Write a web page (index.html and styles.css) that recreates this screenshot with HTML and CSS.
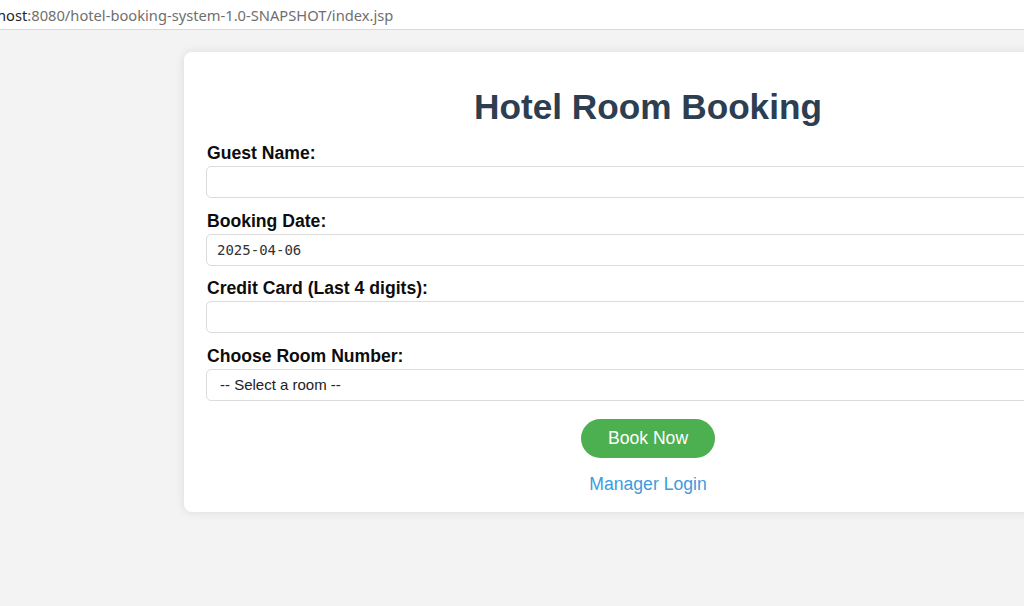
FILE: index.html
```html
<!DOCTYPE html>
<html lang="en">
<head>
<meta charset="utf-8">
<title>Hotel Room Booking</title>
<link rel="stylesheet" href="styles.css">
</head>
<body>
<div class="addressbar"><span class="url"><span class="host">host</span>:8080/hotel-booking-system-1.0-SNAPSHOT/index.jsp</span></div>
<div class="page">
  <div class="card">
    <h1 class="title">Hotel Room Booking</h1>
    <form class="form">
      <label class="label" for="guest">Guest Name:</label>
      <input class="field" id="guest" type="text">
      <label class="label" for="date">Booking Date:</label>
      <input class="field field-date" id="date" type="text" value="2025-04-06">
      <label class="label" for="card">Credit Card (Last 4 digits):</label>
      <input class="field" id="card" type="text">
      <label class="label" for="room">Choose Room Number:</label>
      <select class="field field-select" id="room">
        <option>-- Select a room --</option>
      </select>
      <div class="actions">
        <button class="btn" type="button">Book Now</button>
        <a class="link" href="#">Manager Login</a>
      </div>
    </form>
  </div>
</div>
</body>
</html>
```

FILE: styles.css
```css
* { box-sizing: border-box; }
html, body {
  margin: 0;
  padding: 0;
  width: 1024px;
  height: 606px;
  overflow: hidden;
  background: #f3f3f3;
  font-family: "Liberation Sans", Arial, sans-serif;
}
.addressbar {
  height: 30px;
  background: #ffffff;
  border-bottom: 1px solid #d9d9d9;
  padding-top: 6px;
  overflow: hidden;
  white-space: nowrap;
}
.url {
  display: block;
  margin-left: -3px;
  font-family: "Noto Sans", "Open Sans", sans-serif;
  font-size: 14.7px;
  line-height: 18px;
  color: #6f6f6f;
}
.host { color: #1f1f1f; }
.page {
  padding-top: 22px;
  padding-left: 184px;
}
.card {
  width: 928px;
  height: 460px;
  background: #ffffff;
  border-radius: 8px;
  box-shadow: 0 0 10px rgba(0, 0, 0, 0.1);
  padding: 35px 22px 0 22px;
}
.title {
  margin: 0;
  text-align: center;
  font-size: 35.2px;
  line-height: 39px;
  font-weight: bold;
  color: #2c3e50;
}
.form {
  display: flex;
  flex-direction: column;
  margin-top: 17px;
}
.label {
  display: block;
  padding-left: 1px;
  font-size: 17.6px;
  line-height: 20px;
  font-weight: bold;
  color: #0d0d0d;
  margin-bottom: 3px;
}
.field {
  display: block;
  width: 100%;
  height: 32px;
  margin: 0 0 12.5px 0;
  border: 1px solid #dcdcdc;
  border-radius: 5px;
  background: #fff;
  padding: 0 10px;
  font-family: "Liberation Sans", Arial, sans-serif;
  font-size: 15px;
  color: #222;
  outline: none;
}
.field-date {
  font-family: "DejaVu Sans Mono", monospace;
  font-size: 14px;
  color: #333;
}
.field-select {
  padding-left: 13px;
  appearance: none;
  -webkit-appearance: none;
  margin-bottom: 0;
}
.actions {
  display: flex;
  flex-direction: column;
  align-items: center;
  margin-top: 18px;
}
.btn {
  height: 39px;
  padding: 0 27px;
  border: none;
  border-radius: 20px;
  background: #4caf50;
  color: #ffffff;
  font-family: "Liberation Sans", Arial, sans-serif;
  font-size: 17.6px;
}
.link {
  margin-top: 16px;
  font-size: 17.6px;
  line-height: 20px;
  color: #3d9be0;
  text-decoration: none;
}
```
